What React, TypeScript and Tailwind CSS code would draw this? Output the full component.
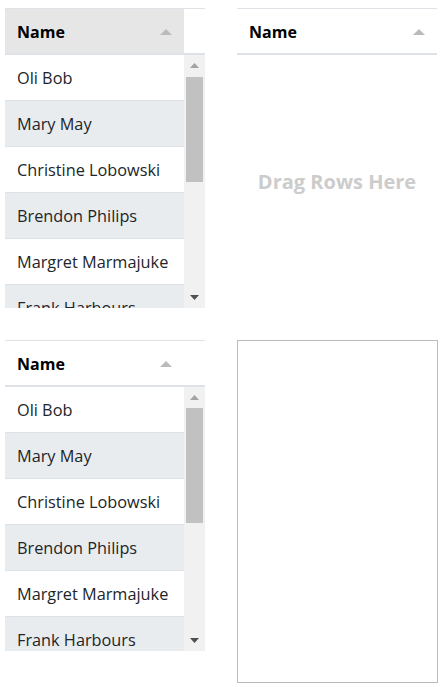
import React from "react";

const names = [
  "Oli Bob",
  "Mary May",
  "Christine Lobowski",
  "Brendon Philips",
  "Margret Marmajuke",
  "Frank Harbours",
];

function SortArrow() {
  return (
    <svg width="12" height="6" viewBox="0 0 12 6" className="block">
      <polygon points="0,6 12,6 6,0" fill="#bbbbbb" />
    </svg>
  );
}

function Header({ hover, full }: { hover?: boolean; full?: boolean }) {
  return (
    <div className="flex h-[47px] border-t border-[#dee2e6] border-b-2 border-b-[#dee2e6] bg-white">
      <div
        className={`flex items-center justify-between pl-[12px] pr-[12px] pt-[2px] ${full ? "w-full" : "w-[179px]"} ${
          hover ? "bg-[#e6e6e6]" : "bg-white"
        }`}
      >
        <span className="font-bold text-[16px] text-black">Name</span>
        <SortArrow />
      </div>
    </div>
  );
}

function Scrollbar({ thumbTop, thumbHeight }: { thumbTop: number; thumbHeight: number }) {
  return (
    <div className="relative w-[21px] h-full bg-[#f1f1f1]">
      <div className="flex h-[21px] items-center justify-center">
        <svg width="9" height="5" viewBox="0 0 9 5">
          <polygon points="0,5 9,5 4.5,0" fill="#a3a3a3" />
        </svg>
      </div>
      <div
        className="absolute left-[2px] w-[17px] bg-[#c1c1c1]"
        style={{ top: thumbTop, height: thumbHeight }}
      />
      <div className="absolute bottom-0 left-0 flex h-[21px] w-[21px] items-center justify-center">
        <svg width="9" height="5" viewBox="0 0 9 5">
          <polygon points="0,0 9,0 4.5,5" fill="#505050" />
        </svg>
      </div>
    </div>
  );
}

function Rows() {
  return (
    <div className="w-[179px] overflow-hidden">
      {names.map((n, i) => (
        <div
          key={n}
          className={`flex h-[46px] items-center border-b border-[#dee2e6] pl-[12px] pt-[1px] text-[16.3px] text-[#212529] whitespace-nowrap ${
            i % 2 === 1 ? "bg-[#e9ecef]" : "bg-white"
          }`}
        >
          {n}
        </div>
      ))}
    </div>
  );
}

function ListTable({
  height,
  hover,
  thumbTop,
  thumbHeight,
}: {
  height: number;
  hover?: boolean;
  thumbTop: number;
  thumbHeight: number;
}) {
  return (
    <div className="flex w-[200px] flex-col bg-white" style={{ height }}>
      <Header hover={hover} />
      <div className="flex flex-1 min-h-0 overflow-hidden">
        <Rows />
        <Scrollbar thumbTop={thumbTop} thumbHeight={thumbHeight} />
      </div>
    </div>
  );
}

export default function App() {
  return (
    <div
      className="min-h-[687px] bg-white pl-[5px] pt-[8px]"
      style={{ fontFamily: '"Open Sans", "Noto Sans", sans-serif' }}
    >
      <div className="flex items-start gap-[32px]">
        <ListTable height={300} hover thumbTop={22} thumbHeight={105} />
        <div className="flex h-[300px] w-[200px] flex-col bg-white">
          <Header full />
          <div className="flex flex-1 items-center justify-center">
            <span className="font-bold text-[20px] text-[#cccccc]">Drag Rows Here</span>
          </div>
        </div>
      </div>
      <div className="mt-[32px] flex items-start gap-[32px]">
        <ListTable height={311} thumbTop={21} thumbHeight={115} />
        <div className="h-[343px] w-[201px] border border-[#bbbbbb] bg-white" />
      </div>
    </div>
  );
}
